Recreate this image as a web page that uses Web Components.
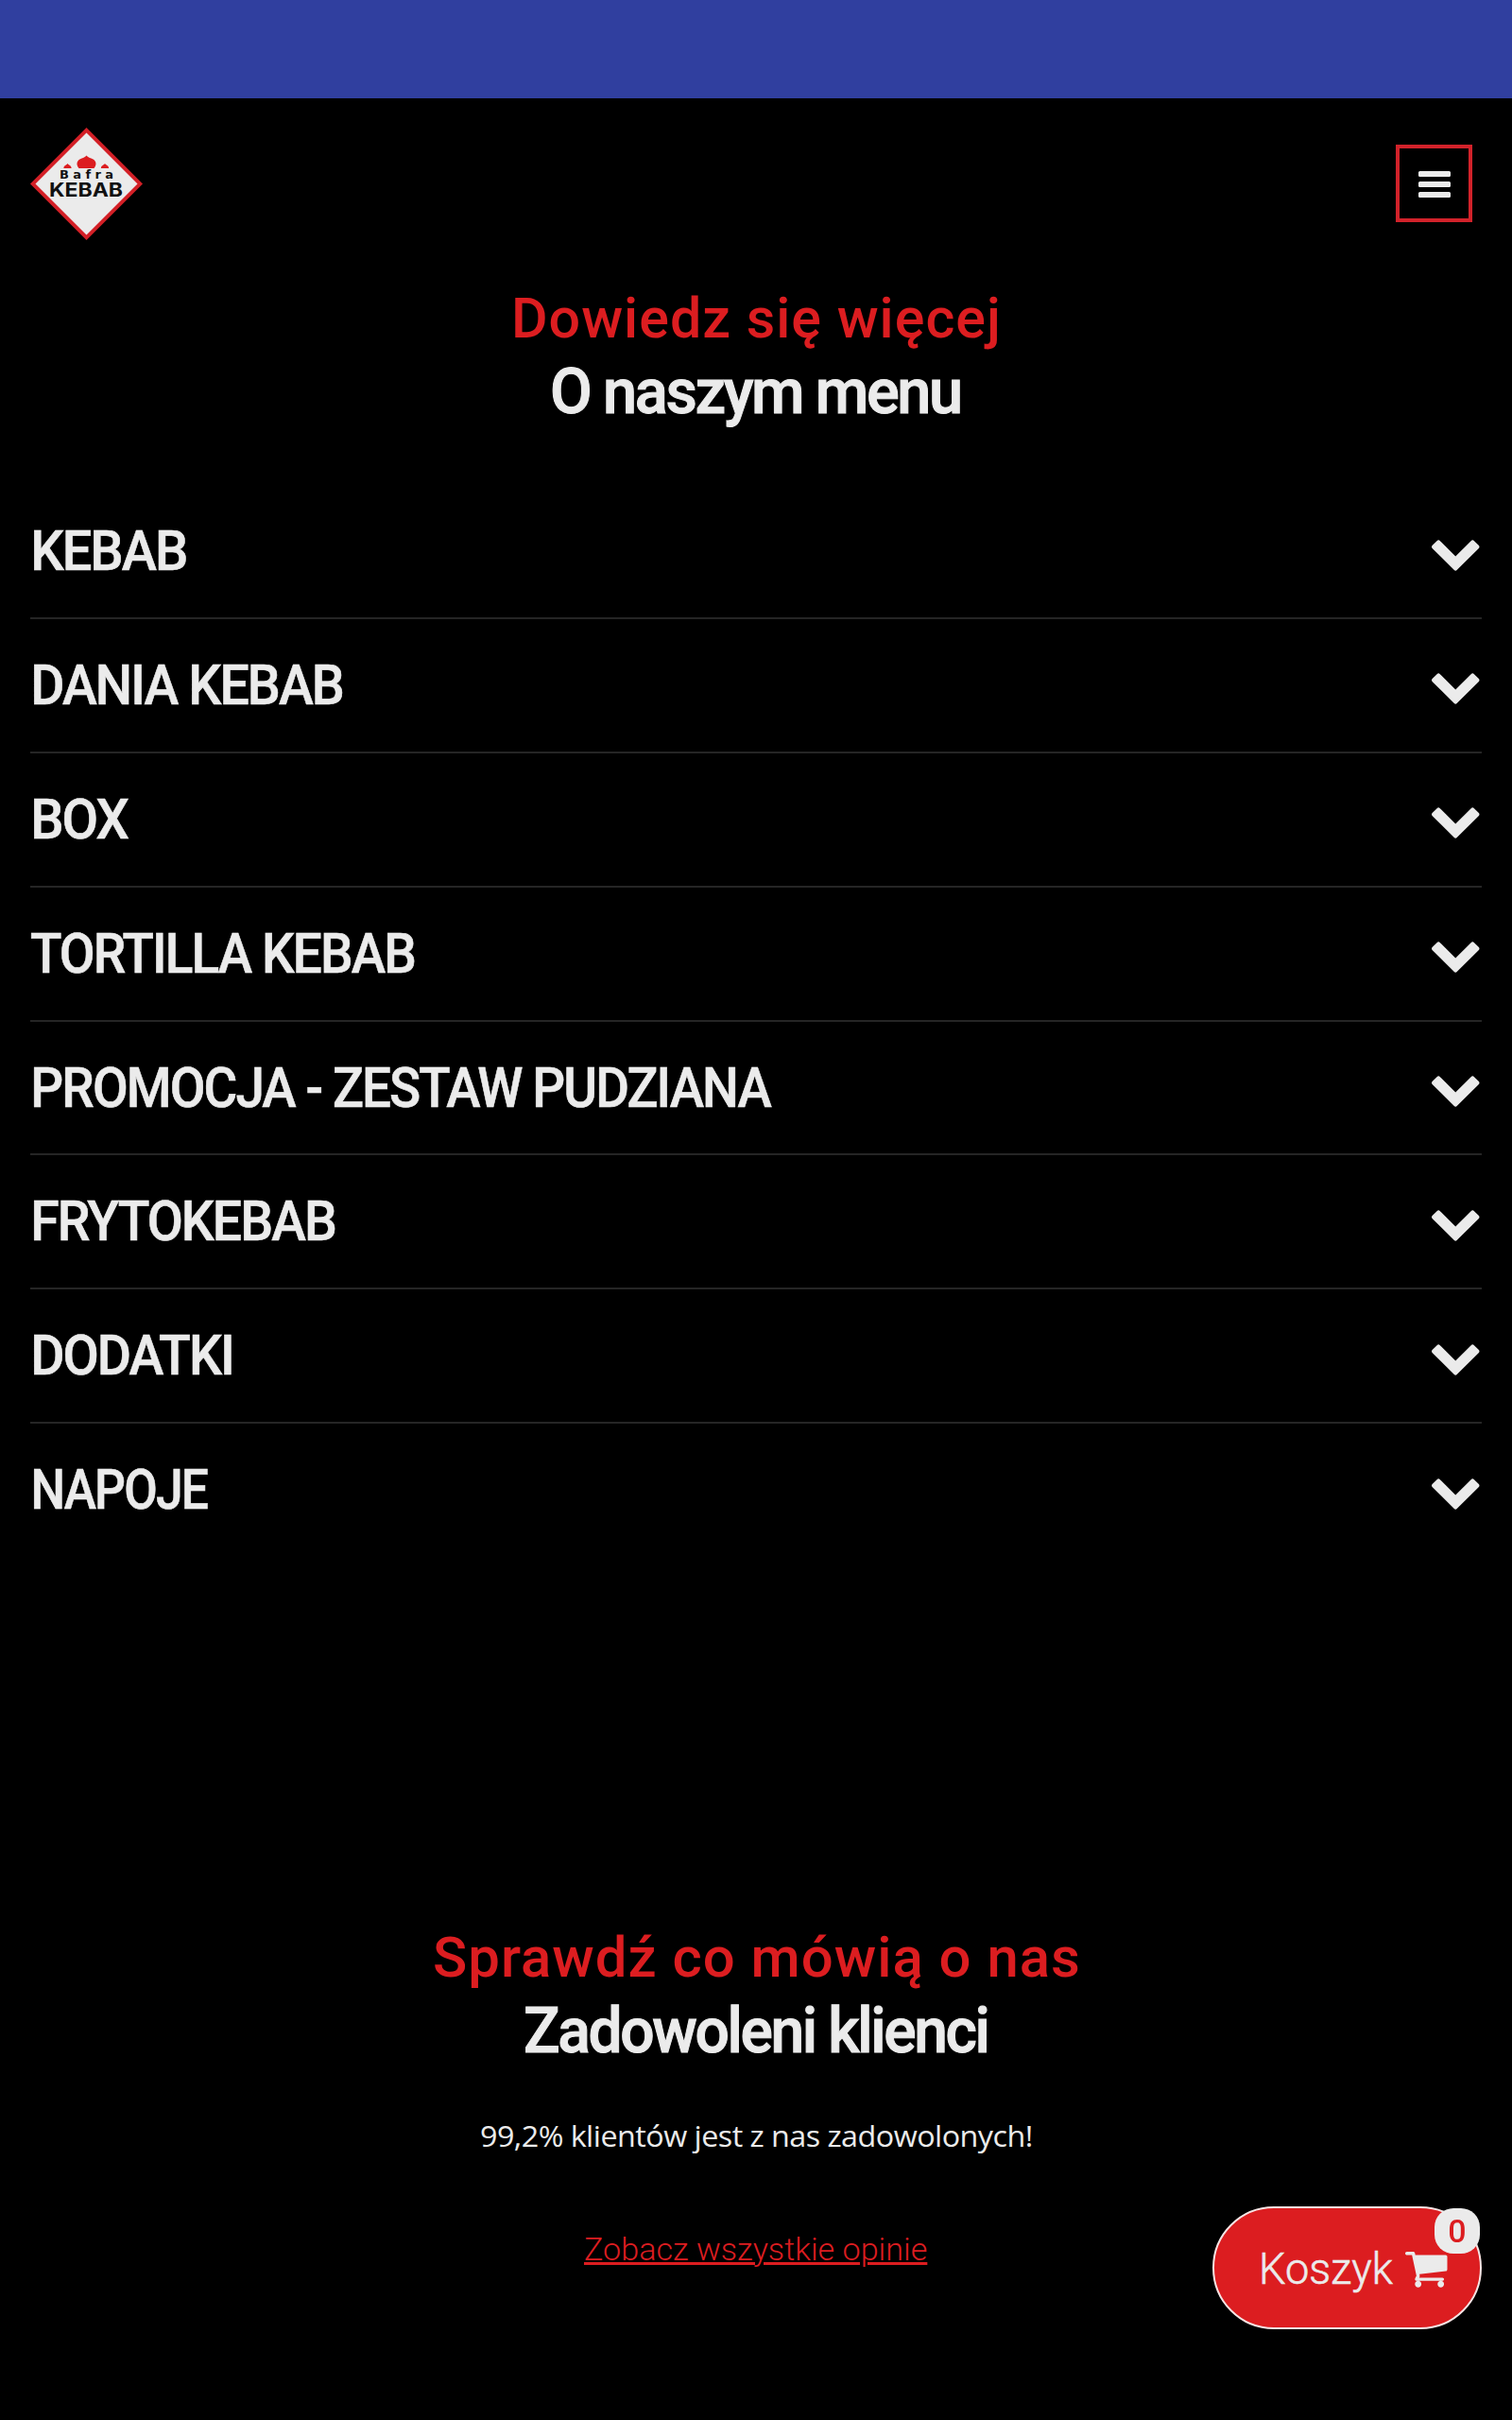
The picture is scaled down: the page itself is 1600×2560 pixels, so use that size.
<!DOCTYPE html>
<html lang="pl">
<head>
<meta charset="utf-8">
<title>Bafra Kebab</title>
<style>
html {
  background: #000;
}
body {
  --red: #dc1d20;
  --light: #ebebeb;
  margin: 0;
  height: 2560px;
  overflow: hidden;
  color: var(--light);
  font-family: Roboto, "Open Sans", sans-serif;
}
</style>
</head>
<body>
<bafra-page></bafra-page>

<script>

const categories = [
  {name: 'KEBAB', width: 160.5},
  {name: 'DANIA KEBAB', width: 326},
  {name: 'BOX', width: 100},
  {name: 'TORTILLA KEBAB', width: 405, indent: 1},
  {name: 'PROMOCJA - ZESTAW PUDZIANA', width: 781},
  {name: 'FRYTOKEBAB', width: 318},
  {name: 'DODATKI', width: 208.5},
  {name: 'NAPOJE', width: 184},
];

const measure = document.createElement('canvas').getContext('2d');

/**
 * A single line of text, condensed or stretched so that its ink fills `width` pixels.
 */
class FitTextElement extends HTMLElement {
  constructor() {
    super();

    const root = this.attachShadow({mode: 'open'});
    root.innerHTML = `
<style>
:host {
  display: block;
  flex: none;
}
span {
  display: inline-block;
  vertical-align: top;
  white-space: nowrap;
  transform-origin: 0 0;
  text-decoration: var(--fit-decoration, none);
  text-underline-offset: 2px;
}
</style>
<span><slot></slot></span>
    `;
    this.span_ = root.querySelector('span');
  }

  connectedCallback() {
    const width = +this.getAttribute('width');
    const style = getComputedStyle(this);
    measure.font = `${style.fontWeight} ${style.fontSize} ${style.fontFamily}`;
    measure.letterSpacing = style.letterSpacing === 'normal' ? '0px' : style.letterSpacing;

    const m = measure.measureText(this.textContent);
    const ink = m.actualBoundingBoxRight + m.actualBoundingBoxLeft;
    const scale = width / ink;
    this.style.width = width + 'px';
    this.span_.style.transform =
        `translateX(${m.actualBoundingBoxLeft * scale}px) scaleX(${scale})`;
  }
}

class BafraLogoElement extends HTMLElement {
  constructor() {
    super();
    this.attachShadow({mode: 'open'}).innerHTML = `
<style>
:host {
  display: block;
}
svg {
  display: block;
}
</style>
<svg width="119" height="119" viewBox="0 0 119 119">
  <path d="M59.5 0L119 59.5 59.5 119 0 59.5z" fill="#d31f26"/>
  <path d="M59.5 5.5L113.5 59.5 59.5 113.5 5.5 59.5z" fill="#ebebeb"/>
  <path d="M51.5 43c-4-5-1.500-9 3-10.500 2.200-.8 3.800-1.500 5-3 1.200 1.500 2.800 2.200 5 3 4.500 1.500 7 5.500 3 10.500z" fill="#dc1d20"/>
  <path d="M35.500 43c-.5-2.600 2.500-3 4-5 1.500 2 4.500 2.400 4 5zM75 43c-.5-2.600 2.500-3 4-5 1.500 2 4.500 2.400 4 5z" fill="#dc1d20"/>
  <g fill="#111" font-weight="700">
    <text x="31" y="54" font-size="13" textLength="57" lengthAdjust="spacing" font-family="'DejaVu Sans', sans-serif">Bafra</text>
    <text x="20" y="72.500" font-size="20" textLength="78" lengthAdjust="spacingAndGlyphs" font-family="Inter, sans-serif">KEBAB</text>
  </g>
</svg>
    `;
  }
}

class MenuButtonElement extends HTMLElement {
  constructor() {
    super();
    this.attachShadow({mode: 'open'}).innerHTML = `
<style>
:host {
  display: block;
}
button {
  box-sizing: border-box;
  width: 81px;
  height: 82px;
  margin-bottom: 1px;
  padding: 1px 0 0;
  display: flex;
  flex-direction: column;
  align-items: center;
  justify-content: center;
  gap: 5px;
  background: none;
  border: 4px solid #d2222a;
}
i {
  width: 34px;
  height: 6px;
  border-radius: 1.5px;
  background: var(--light);
}
</style>
<button aria-label="Menu"><i></i><i></i><i></i></button>
    `;
  }
}

class SectionTitleElement extends HTMLElement {
  constructor() {
    super();
    this.attachShadow({mode: 'open'}).innerHTML = `
<style>
:host {
  display: flex;
  flex-direction: column;
  align-items: center;
}
.lead {
  color: var(--red);
  font-size: 59px;
  font-weight: 500;
  line-height: 77px;
  letter-spacing: 1px;
}
.title {
  font-size: 67px;
  font-weight: 500;
  line-height: 78px;
  letter-spacing: -2.5px;
  -webkit-text-stroke: 1px;
}
</style>
<fit-text class="lead" width="${this.getAttribute('lead-width')}">${this.getAttribute('lead')}</fit-text>
<fit-text class="title" width="${this.getAttribute('title-width')}">${this.getAttribute('heading')}</fit-text>
    `;
  }
}

class MenuCategoryElement extends HTMLElement {
  constructor() {
    super();
    this.attachShadow({mode: 'open'}).innerHTML = `
<style>
:host {
  box-sizing: border-box;
  display: flex;
  align-items: center;
  justify-content: space-between;
  height: 141.86px;
  padding: 0 2.5px 0 4px;
  border-bottom: 2px solid #252525;
  font-size: 58.5px;
  font-weight: 500;
  line-height: 80px;
  letter-spacing: -2px;
  -webkit-text-stroke: .6px;
}
:host(:last-child) {
  border-bottom-color: transparent;
}
svg {
  margin-top: 8px;
  width: 50.5px;
  height: 33px;
  fill: var(--light);
}
</style>
<slot></slot>
<svg viewBox="90 533 1612 1035"><path d="M1683 808l-742 741q-19 19-45 19t-45-19l-742-741q-19-19-19-45.500t19-45.500l166-165q19-19 45-19t45 19l531 531 531-531q19-19 45-19t45 19l166 165q19 19 19 45.500t-19 45.500z"/></svg>
    `;
  }
}

/**
 * Floating basket button, with the number of items in a badge.
 */
class BasketButtonElement extends HTMLElement {
  constructor() {
    super();
    this.attachShadow({mode: 'open'}).innerHTML = `
<style>
:host {
  position: fixed;
  right: 32px;
  bottom: 96px;
  box-sizing: border-box;
  width: 285px;
  height: 130px;
  display: flex;
  align-items: center;
  gap: 13px;
  padding: 1px 0 0 51px;
  background: var(--red);
  border: 2px solid #f5e4e4;
  border-radius: 65px;
}
.label {
  font-size: 46.5px;
  font-weight: 300;
  line-height: 60px;
  -webkit-text-stroke: .6px;
}
svg {
  margin-top: 3px;
  width: 44.5px;
  height: 37.7px;
  fill: var(--light);
}
.badge {
  position: absolute;
  top: 0;
  right: 0;
  width: 48px;
  height: 48px;
  display: flex;
  align-items: center;
  justify-content: center;
  background: var(--light);
  border-radius: 20px;
  color: var(--red);
  font-size: 34px;
  font-weight: 500;
}
</style>
<fit-text class="label" width="138">Koszyk</fit-text>
<svg viewBox="0 256 1664 1408"><path d="M640 1536q0 52-38 90t-90 38-90-38-38-90 38-90 90-38 90 38 38 90zm896 0q0 52-38 90t-90 38-90-38-38-90 38-90 90-38 90 38 38 90zm128-1088v512q0 24-16.500 42.500t-40.500 21.500l-1044 122q13 60 13 70 0 16-24 64h920q26 0 45 19t19 45-19 45-45 19h-1024q-26 0-45-19t-19-45q0-11 8-31.500t16-36 21.500-40 15.500-29.500l-177-823h-204q-26 0-45-19t-19-45 19-45 45-19h256q16 0 28.500 6.500t19.500 15.500 13 24.500 8 26 5.500 29.500 4.500 26h1201q26 0 45 19t19 45z"/></svg>
<div class="badge"><slot></slot></div>
    `;
  }
}

class BafraPageElement extends HTMLElement {
  constructor() {
    super();

    const rows = categories.map(({name, width, indent = 4}) => `
  <menu-category style="padding-left: ${indent}px"><fit-text width="${width}">${name}</fit-text></menu-category>`);

    this.attachShadow({mode: 'open'}).innerHTML = `
<style>
:host {
  display: block;
}
.strip {
  height: 104px;
  background: #303f9f;
}
header {
  box-sizing: border-box;
  height: 181px;
  padding: 0 42px 0 32px;
  display: flex;
  align-items: center;
  justify-content: space-between;
}
main {
  padding: 13px 32px 0;
}
.list {
  margin-top: 60.2px;
}
.reviews {
  margin-top: 384px;
  display: flex;
  flex-direction: column;
  align-items: center;
}
p {
  margin: 48px 0 71px;
  font: 31px/48px "Open Sans", sans-serif;
  letter-spacing: -.5px;
}
a {
  --fit-decoration: underline 3px;
  color: var(--red);
  font-size: 33.5px;
  font-weight: 300;
  line-height: 52px;
}
</style>
<div class="strip"></div>
<header>
  <bafra-logo></bafra-logo>
  <menu-button></menu-button>
</header>
<main>
  <section-title lead="Dowiedz się więcej" lead-width="511" heading="O naszym menu" title-width="431"></section-title>
  <div class="list">${rows.join('')}
  </div>
  <section class="reviews">
    <section-title lead="Sprawdź co mówią o nas" lead-width="680.5" heading="Zadowoleni klienci" title-width="489"></section-title>
    <p><fit-text width="582">99,2% klientów jest z nas zadowolonych!</fit-text></p>
    <a><fit-text width="362">Zobacz wszystkie opinie</fit-text></a>
  </section>
</main>
<basket-button>0</basket-button>
    `;
  }
}

customElements.define('fit-text', FitTextElement);
customElements.define('bafra-logo', BafraLogoElement);
customElements.define('menu-button', MenuButtonElement);
customElements.define('section-title', SectionTitleElement);
customElements.define('menu-category', MenuCategoryElement);
customElements.define('basket-button', BasketButtonElement);
customElements.define('bafra-page', BafraPageElement);

</script>
</body>
</html>
